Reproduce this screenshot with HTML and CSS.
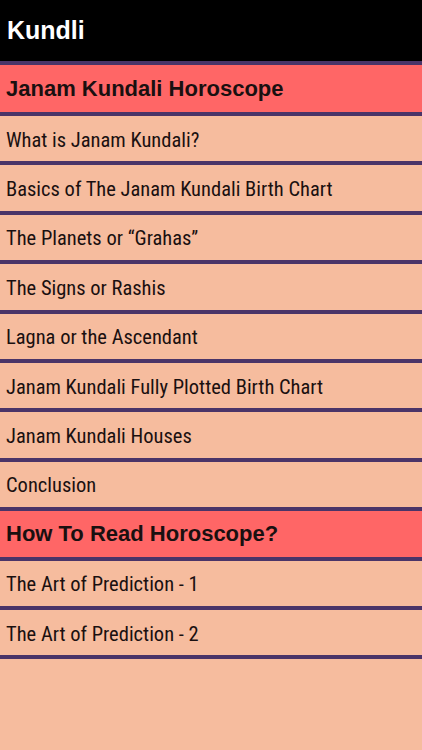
FILE: index.html
```html
<!DOCTYPE html>
<html lang="en">
<head>
  <meta charset="UTF-8">
  <meta name="viewport" content="width=device-width, initial-scale=1.0">
  <title>Kundli</title>
  <link rel="stylesheet" href="styles.css">
</head>
<body>

  <div class="top-bar">Kundli</div>

  <ul class="menu">
    <li class="section">Janam Kundali Horoscope</li>
    <li class="item">What is Janam Kundali?</li>
    <li class="item">Basics of The Janam Kundali Birth Chart</li>
    <li class="item">The Planets or “Grahas”</li>
    <li class="item">The Signs or Rashis</li>
    <li class="item">Lagna or the Ascendant</li>
    <li class="item">Janam Kundali Fully Plotted Birth Chart</li>
    <li class="item">Janam Kundali Houses</li>
    <li class="item">Conclusion</li>
    <li class="section">How To Read Horoscope?</li>
    <li class="item">The Art of Prediction - 1</li>
    <li class="item">The Art of Prediction - 2</li>
  </ul>

</body>
</html>
```

FILE: styles.css
```css
body {
  margin: 0;
  background-color: #f6bc9e;
  color: #1a1010;
  font-family: 'Liberation Sans', Arial, sans-serif;
}

.top-bar {
  height: 61px;
  display: flex;
  align-items: center;
  padding-left: 7px;
  background-color: #000;
  border-bottom: 4px solid #4a3468;
  color: white;
  font-size: 25px;
  font-weight: bold;
}

.menu {
  list-style: none;
  margin: 0;
  padding: 0;
}

.menu li {
  box-sizing: border-box;
  height: 49.4px;
  display: flex;
  align-items: center;
  padding-left: 6px;
  border-bottom: 4px solid #4a3468;
}

.menu li:first-child {
  height: 51px;
}

.section {
  background-color: #ff6666;
  font-size: 22px;
  font-weight: bold;
}

.item {
  font-family: 'Roboto Condensed', 'Liberation Sans', sans-serif;
  font-size: 20.5px;
  padding-top: 2px;
}
```
